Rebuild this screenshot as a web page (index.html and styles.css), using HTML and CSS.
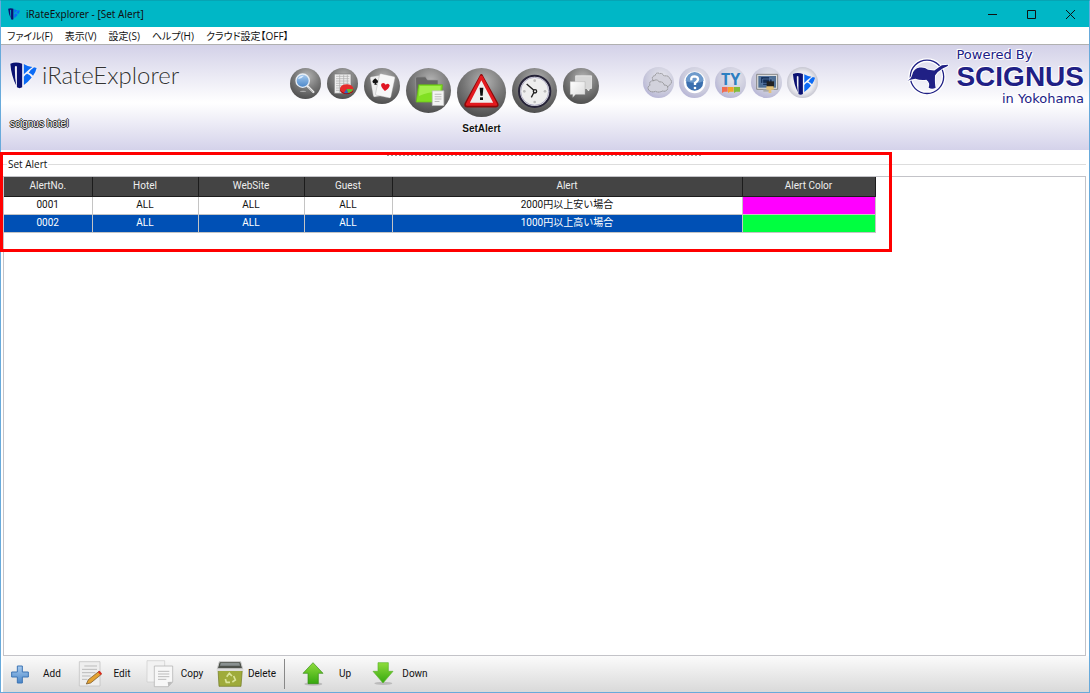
FILE: index.html
```html
<!DOCTYPE html>
<html lang="ja">
<head>
<meta charset="utf-8">
<title>iRateExplorer - [Set Alert]</title>
<link rel="stylesheet" href="styles.css">
</head>
<body>
<svg class="defs" width="0" height="0" aria-hidden="true">
  <defs>
    <linearGradient id="green" x1="0" y1="0" x2="0" y2="1"><stop offset="0" stop-color="#8fdc3c"/><stop offset="1" stop-color="#35a80f"/></linearGradient>
    <linearGradient id="paper" x1="0" y1="0" x2="1" y2="1"><stop offset="0" stop-color="#ffffff"/><stop offset="1" stop-color="#d9d9d9"/></linearGradient>
    <linearGradient id="blue" x1="0" y1="0" x2="0" y2="1"><stop offset="0" stop-color="#a8ccf0"/><stop offset="1" stop-color="#4a86c8"/></linearGradient>
    <symbol id="mark" viewBox="0 0 82 80">
      <path fill="#0a1172" d="M1 4Q18-3 37 4V76Q29 81 21 76V13Q18 9 15 13Q14 44 19 70Q4 42 1 4Z"/>
      <path fill="#0c6bf5" d="M42 5Q56 14 68 14Q54 24 42 36ZM73 15L81 17Q78 30 70 41Q65 35 57 32Q62 22 73 15ZM42 44Q47 37 52 35Q60 37 66 46Q56 59 42 69Z"/>
    </symbol>
  </defs>
</svg>
<div class="window">
  <header class="titlebar">
    <svg class="titlebar-icon"><use href="#mark"/></svg>
    <h1 class="titlebar-text">iRateExplorer - [Set Alert]</h1>
    <div class="window-controls">
      <button type="button" aria-label="Minimize"><svg viewBox="0 0 10 10"><path d="M1 5.500h9"/></svg></button>
      <button type="button" aria-label="Maximize"><svg viewBox="0 0 10 10"><path d="M1.500 1.500h8v8h-8z"/></svg></button>
      <button type="button" aria-label="Close"><svg viewBox="0 0 10 10"><path d="M1 1l9 9M10 1l-9 9"/></svg></button>
    </div>
  </header>
  <nav class="menubar" aria-label="Menu">
    <button type="button">ファイル(F)</button>
    <button type="button">表示(V)</button>
    <button type="button">設定(S)</button>
    <button type="button">ヘルプ(H)</button>
    <button type="button">クラウド設定【OFF】</button>
  </nav>
  <div class="banner">
    <div class="brand">
      <div class="brand-row">
        <svg class="brand-mark"><use href="#mark"/></svg>
        <span class="brand-name">iRateExplorer</span>
      </div>
      <span class="hotel">scignus hotel</span>
    </div>
    <nav class="dock" aria-label="Tools">
      <button type="button" class="orb orb-s" aria-label="Search">
        <svg viewBox="0 0 93 93"><path d="M52 54L70 72" stroke="#eee" stroke-width="7" stroke-linecap="round"/><path d="M54 58L69 73" stroke="#888" stroke-width="2"/><circle cx="38" cy="38" r="20" fill="url(#blue)" stroke="#e8eef5" stroke-width="4"/><path d="M24 34Q28 22 42 23Q35 32 24 34" fill="#dcecff"/><ellipse cx="39" cy="70" rx="10" ry="2" fill="#ccc" opacity=".7"/></svg>
      </button>
      <button type="button" class="orb orb-s" aria-label="Report">
        <svg viewBox="0 0 93 93"><path fill="#eee" stroke="#777" stroke-width="2" d="M22 18h50v58H22z"/><path d="M27 25h40M27 32h40M27 39h40M27 46h40M27 53h40M27 60h40M27 67h40M38 20v54M50 20v54M61 20v54" stroke="#aaa" stroke-width="2"/><ellipse cx="59" cy="66" rx="20" ry="13" fill="#a40d0d"/><ellipse cx="59" cy="62" rx="20" ry="13" fill="#e52b2b"/><path fill="#2d66c4" d="M59 63L51 75Q57 77 64 75Z"/><path fill="#5ac433" d="M59 63l5 12Q76 72 78 64Z"/></svg>
      </button>
      <button type="button" class="orb orb-m" aria-label="Cards">
        <svg viewBox="0 0 105 105"><rect x="22" y="22" width="40" height="60" rx="4" fill="#eee" stroke="#888" transform="rotate(-10 42 52)"/><path d="M33 30Q20 39 27 44Q31 46 32 43L30 49H38L35 43Q42 46 42 39Z" fill="#111"/><rect x="39" y="20" width="46" height="64" rx="4" fill="#f7f7f7" stroke="#999" transform="rotate(12 62 52)"/><path fill="#e01522" d="M61 67Q46 53 51 46Q59 41 63 49Q72 42 75 51Q73 60 61 67Z"/></svg>
      </button>
      <button type="button" class="orb orb-l" aria-label="Files">
        <svg viewBox="0 0 132 132"><path fill="#666" stroke="#9a9a9a" stroke-width="2" d="M28 30q0-4 4-4h25l6 9h31v64H30z"/><path fill="#81e022" stroke="#61b812" stroke-width="2" d="M37 49h70l-5 51H30z"/><path d="M40 53h62l-2 18Q72 67 38 82z" fill="#a2ef4c"/><path fill="#f4f4f4" stroke="#bbb" stroke-width="2" d="M77 67h34v43H77z"/><path d="M84 77h20M84 84h20M84 91h20M84 98h14" stroke="#bbb" stroke-width="3"/></svg>
      </button>
      <button type="button" class="orb-item">
        <span class="orb orb-xl">
          <svg viewBox="0 0 147 147"><path d="M73 23L120 108Q122 114 115 114H31Q24 114 27 107Z" fill="#e3e3e3" stroke="#8b0909" stroke-width="9" stroke-linejoin="round"/><path d="M73 27L116 109H31Z" fill="#efefef" stroke="#e31a1f" stroke-width="9" stroke-linejoin="round"/><path d="M68 59h11l-2 24h-7z" fill="#111"/><rect x="69" y="88" width="9" height="8" fill="#111"/></svg>
        </span>
        <span class="orb-label">SetAlert</span>
      </button>
      <button type="button" class="orb orb-l" aria-label="Schedule">
        <svg viewBox="0 0 135 135"><circle cx="68" cy="70" r="47" fill="#eee" stroke="#252238" stroke-width="6"/><circle cx="68" cy="70" r="42" fill="none" stroke="#8b88ab" stroke-width="2"/><g fill="#bbb"><circle cx="68" cy="38" r="4"/><circle cx="68" cy="102" r="4"/><circle cx="37" cy="70" r="4"/><circle cx="99" cy="70" r="4"/></g><path d="M44 48L68 69L58 88" fill="none" stroke="#222" stroke-width="4"/><circle cx="69" cy="70" r="5" fill="#eee" stroke="#222" stroke-width="4"/></svg>
      </button>
      <button type="button" class="orb orb-m" aria-label="Messages">
        <svg viewBox="0 0 111 111"><path fill="#d8d8d8" stroke="#f5f5f5" stroke-width="2" d="M39 24h49v39h-6l-3 8-6-8H39z"/><path fill="url(#paper)" stroke="#999" d="M22 42h46v40H39l-9 9V82h-8z"/></svg>
      </button>
    </nav>
    <nav class="dock dock-small" aria-label="Services">
      <button type="button" class="orb orb-light" aria-label="Cloud">
        <svg viewBox="0 0 93 93"><g fill="#d2d2dc" stroke="#777" stroke-width="2" stroke-dasharray="5 1"><path d="M30 40Q24 28 36 26Q40 14 50 20Q58 17 63 27Q77 24 81 36Q90 44 81 53Q77 61 64 57Z"/><path d="M19 71Q10 61 21 55Q17 41 32 41Q43 35 49 45Q61 43 63 54Q76 54 74 66Q69 75 59 72Q46 78 38 73Q26 77 19 71Z"/></g></svg>
      </button>
      <button type="button" class="orb orb-light" aria-label="Help">
        <svg viewBox="0 0 93 93"><circle cx="47" cy="46" r="29" fill="#3c70af" stroke="#fff" stroke-width="7"/><path d="M20 42A27 27 0 0 1 74 42Q52 54 20 42" fill="#6d9acb"/><path d="M37 40Q35 28 47 28Q58 29 57 38Q55 44 48 48V54" fill="none" stroke="#fff" stroke-width="7"/><circle cx="48" cy="63" r="4" fill="#fff"/></svg>
      </button>
      <button type="button" class="orb orb-light orb-ty" aria-label="TY">
        <span class="ty">TY</span>
        <svg class="ty-tiles" viewBox="0 0 54 18"><path fill="#f16b50" d="M0 0h17v14H6l-6 4z"/><path fill="#f6a329" d="M18 0h17v14H24l-6 4z"/><path fill="#80bd3b" d="M36 0h18v14H42l-6 4z"/></svg>
      </button>
      <button type="button" class="orb orb-light" aria-label="Remote desktop">
        <svg viewBox="0 0 93 93"><path fill="#ddd" stroke="#888" stroke-width="3" d="M17 22h63v45H17z"/><path fill="#4f6f94" d="M22 27h53v35H22z"/><path fill="#142e55" stroke="#6688b3" stroke-width="2" d="M29 29h27v20H29zM35 36h28v19H35z"/><path fill="#aaa" d="M37 67h23v7H37z"/><path fill="#222" d="M47 43h22v18H47z"/><path fill="#e5c277" d="M46 58h22v10h-7v10h-8V68h-7z"/></svg>
      </button>
      <button type="button" class="orb orb-white" aria-label="iRateExplorer">
        <svg viewBox="0 0 93 93"><use href="#mark" x="17" y="16" width="68" height="70"/></svg>
      </button>
    </nav>
    <div class="sponsor">
      <svg class="sponsor-bird" viewBox="46 56 126 110"><circle cx="106" cy="112" r="50" fill="none" stroke="#fff" stroke-width="12"/><circle cx="106" cy="112" r="50" fill="none" stroke="#202085" stroke-width="4"/><path stroke="#fff" stroke-width="5" paint-order="stroke" fill="#202085" d="M47 124Q58 119 62 105Q66 87 84 84Q99 82 109 91L128 93Q144 81 151 77L170 76Q169 82 154 86Q138 95 130 108Q129 135 132 145Q121 151 111 145Q117 131 104 121Q86 123 71 118Q60 120 47 124Z"/></svg>
      <div class="sponsor-text">
        <span class="sponsor-small">Powered By</span>
        <span class="sponsor-name">SCIGNUS</span>
        <span class="sponsor-small sponsor-end">in Yokohama</span>
      </div>
    </div>
  </div>
  <main class="panel">
    <div class="grip"></div>
    <h2 class="group-title">Set Alert</h2>
    <div class="list">
      <table class="alerts">
        <colgroup><col class="col-no"><col class="col-site"><col class="col-site"><col class="col-no"><col class="col-alert"><col class="col-color"></colgroup>
        <thead><tr><th>AlertNo.</th><th>Hotel</th><th>WebSite</th><th>Guest</th><th>Alert</th><th>Alert Color</th></tr></thead>
        <tbody>
          <tr><td>0001</td><td>ALL</td><td>ALL</td><td>ALL</td><td>2000円以上安い場合</td><td class="magenta"></td></tr>
          <tr class="selected"><td>0002</td><td>ALL</td><td>ALL</td><td>ALL</td><td>1000円以上高い場合</td><td class="lime"></td></tr>
        </tbody>
      </table>
    </div>
    <div class="highlight"></div>
  </main>
  <footer class="toolbar">
    <button type="button" class="tool"><svg viewBox="0 0 84 84"><path fill="url(#blue)" stroke="#3c74b4" stroke-width="3" d="M34 18h15v18h18v15H49v18H34V51H17V36h17z"/></svg><span>Add</span></button>
    <button type="button" class="tool"><svg viewBox="0 0 84 84"><path fill="#eee" stroke="#bbb" stroke-width="2" d="M10 5h62v73H10z"/><path d="M25 18h38M18 28h45M18 38h40M18 48h26M18 58h16" stroke="#bbb" stroke-width="3"/><path fill="#e3a233" stroke="#69491c" stroke-width="2" d="M31 72l6-13 32-25 7 9-32 26z"/><path fill="#d92a20" d="M66 36l5-4 7 9-5 4z"/><path d="M31 72l6-3-4-3z"/></svg><span>Edit</span></button>
    <button type="button" class="tool"><svg viewBox="0 0 84 84"><path fill="#f2f2f2" stroke="#ccc" stroke-width="2" d="M3 2h53v64H3z"/><path fill="#f7f7f7" stroke="#aaa" stroke-width="2" d="M25 18h55v48L67 80H25z"/><path d="M36 34h34M36 42h34M36 50h34M36 58h25" stroke="#bbb" stroke-width="3"/><path fill="#bbb" d="M80 65L67 80 65 66z"/></svg><span>Copy</span></button>
    <button type="button" class="tool"><svg viewBox="0 0 84 84"><path fill="#9fab3b" stroke="#6d7621" stroke-width="2" d="M6 28h73l-4 51H9z"/><path fill="#4e524b" stroke="#ccc" stroke-width="3" d="M10 5h64l6 21H4z"/><path fill="#8a9190" d="M14 9h56l2 8H12z"/><path d="M2 27h80v6H2z" fill="#dedede"/><path fill="none" stroke="#dbe59a" stroke-width="5" d="M32 50l8-10 8 8M53 48l5 12-9 6M42 67H31l-3-10"/></svg><span>Delete</span></button>
    <div class="tool-divider"></div>
    <button type="button" class="tool"><svg viewBox="0 0 84 84"><ellipse cx="43" cy="72" rx="27" ry="5" fill="#bbb"/><path fill="url(#green)" stroke="#358c13" stroke-width="2" d="M42 8L72 40H58v31H27V40H12z"/></svg><span>Up</span></button>
    <button type="button" class="tool"><svg viewBox="0 0 84 84"><ellipse cx="43" cy="70" rx="27" ry="5" fill="#bbb"/><path fill="url(#green)" stroke="#5bb52c" stroke-width="2" d="M27 8h31v26h14L42 69 12 34h15z"/></svg><span>Down</span></button>
  </footer>
</div>
</body>
</html>
```
FILE: styles.css
```css
* {
  box-sizing: border-box;
}

body {
  margin: 0;
  background: #fff;
  color: #111;
  font: 10px/14px Roboto, "Noto Sans CJK JP", sans-serif;
}

button {
  padding: 0;
  border: 0;
  background: none;
  color: inherit;
  font: inherit;
}

svg {
  display: block;
  fill: none;
}

.defs {
  position: absolute;
}

.window {
  display: flex;
  flex-direction: column;
  min-height: 100vh;
  border: 1px solid #68aadb;
  border-top-color: #06a4b4;
}

/* Title bar and menu */

.titlebar {
  display: flex;
  align-items: center;
  height: 26px;
  padding-left: 7px;
  background: #00b7c6;
}

.titlebar-icon {
  width: 12px;
  height: 12px;
}

.titlebar-text {
  margin: 0 auto 0 6px;
  font: 10px/14px "Noto Sans", sans-serif;
}

.window-controls {
  display: flex;
}

.window-controls button {
  display: grid;
  place-items: center;
  width: 39px;
  height: 26px;
}

.window-controls svg {
  width: 10px;
  height: 10px;
  overflow: visible;
  stroke: #111;
}

.menubar {
  display: flex;
  gap: 12px;
  height: 18px;
  padding-left: 6px;
  border-bottom: 1px solid #b0b0b0;
  font: 10px/16px "Open Sans", "Noto Sans CJK JP", sans-serif;
  font-feature-settings: "palt";
}

/* Banner */

.banner {
  display: flex;
  align-items: flex-start;
  height: 105px;
  background: linear-gradient(#d3d1e8, #fff 55%, #d4d2ea);
}

.brand {
  display: flex;
  flex-direction: column;
  gap: 28px;
  width: 289px;
  padding: 15px 0 0 9px;
}

.brand-row {
  display: flex;
  align-items: center;
  gap: 5px;
}

.brand-mark {
  width: 27px;
  height: 27px;
  filter: drop-shadow(0 0 1px #fff);
}

.brand-name {
  color: #333;
  font: 300 24px/30px Lato, sans-serif;
  text-shadow: 0 0 2px #fff;
}

.hotel {
  color: #fff;
  font: 10px/12px "Liberation Sans", sans-serif;
  text-shadow: 1px 0 #222, -1px 0 #222, 0 1px #222, 0 -1px #222;
}

.dock {
  display: flex;
  align-items: flex-start;
  gap: 6px;
  padding-top: 23px;
}

.dock-small {
  gap: 5px;
  margin-left: 44px;
  padding-top: 22px;
}

.orb {
  display: block;
  flex: none;
  width: 31px;
  height: 31px;
  border-radius: 50%;
  background: radial-gradient(circle at 55% 28%, #b4b4b4, #777 45%, #3d3d3d 95%);
}

.orb svg {
  width: 100%;
  height: 100%;
}

.orb-m {
  width: 36px;
  height: 36px;
}

.orb-l {
  width: 45px;
  height: 45px;
}

.orb-xl {
  width: 49px;
  height: 49px;
}

.orb-item {
  display: flex;
  flex-direction: column;
  align-items: center;
  gap: 5px;
}

.orb-label {
  font: bold 10px/14px "Liberation Sans", sans-serif;
  text-shadow: 0 0 2px #fff, 0 0 2px #fff;
}

.orb-light {
  background: radial-gradient(circle at 60% 35%, #e8e8ee, #c9c9dc 55%, #a5a2d0);
}

.orb-white {
  background: radial-gradient(circle, #fff, #e9e9ee 50%, #c0c0cc 75%);
}

.orb-ty {
  display: flex;
  flex-direction: column;
  align-items: center;
  padding-top: 4px;
}

.ty {
  color: #2d7fc1;
  font: bold 16px/16px "Open Sans", sans-serif;
}

.orb .ty-tiles {
  width: 18px;
  height: 6px;
}

.sponsor {
  display: flex;
  gap: 7px;
  margin-left: auto;
  padding: 3px 5px 0 0;
  color: #202085;
}

.sponsor-bird {
  width: 42px;
  height: 37px;
  margin-top: 10px;
}

.sponsor-text {
  display: flex;
  flex-direction: column;
  text-shadow: 0 0 2px #fff, 0 0 2px #fff, 1px 1px #fff, -1px -1px #fff;
}

.sponsor-small {
  font: 13px/14px "DejaVu Sans", sans-serif;
}

.sponsor-name {
  font: bold 28px/30px "Liberation Sans", sans-serif;
}

.sponsor-end {
  text-align: right;
}

/* Alert list */

.panel {
  position: relative;
  display: flex;
  flex: 1;
  flex-direction: column;
  padding: 4px 3px 0 2px;
}

.grip {
  align-self: center;
  width: 29%;
  height: 2px;
  background: repeating-linear-gradient(90deg, #999 0 2px, #fff 2px 4px);
}

.group-title {
  display: flex;
  align-items: center;
  gap: 1px;
  margin: 1px 0 5px;
  font: 10px/14px "Open Sans", sans-serif;
}

.group-title::before,
.group-title::after {
  width: 4px;
  height: 1px;
  background: #ddd;
  content: "";
}

.group-title::after {
  flex: 1;
}

.list {
  flex: 1;
  border: 1px solid #c3c3c8;
}

.alerts {
  border-collapse: collapse;
  table-layout: fixed;
  width: 871px;
  text-align: center;
}

.col-no {
  width: 88px;
}

.col-site {
  width: 106px;
}

.col-alert {
  width: 350px;
}

.col-color {
  width: 133px;
}

.alerts th,
.alerts td {
  height: 18px;
  padding: 0;
  border: 1px solid #c4c4c4;
  border-width: 0 1px 1px 0;
}

.alerts th {
  height: 19px;
  border-color: #1c1c1c;
  background: #444;
  color: #eee;
  font-weight: 400;
}

.alerts .selected {
  background: #0050b5;
  color: #fff;
}

.alerts .magenta {
  background: #f0f;
}

.alerts .lime {
  background: #00ff40;
}

.highlight {
  position: absolute;
  top: 2px;
  left: -1px;
  width: 892px;
  height: 100px;
  border: 3px solid #f00;
}

/* Bottom toolbar */

.toolbar {
  display: flex;
  align-items: center;
  height: 36px;
  margin-left: 2px;
  padding-left: 3px;
  background: linear-gradient(#fbfbfb, #d9d9d9);
}

.tool {
  display: flex;
  align-items: center;
  width: 70px;
  height: 30px;
  padding-right: 6px;
}

.tool svg {
  flex: none;
  width: 28px;
  height: 28px;
}

.tool span {
  flex: 1;
}

.tool-divider {
  width: 1px;
  height: 30px;
  margin: 0 14px 0 -2px;
  background: #888;
}
```
